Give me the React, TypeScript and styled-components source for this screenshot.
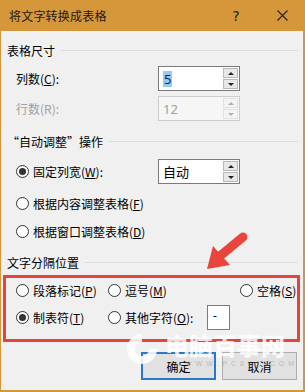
import React from "react";
import styled, { createGlobalStyle } from "styled-components";

const Global = createGlobalStyle`
  html, body { margin: 0; padding: 0; background: #f0f0f0; }
  body {
    font-family: "Noto Sans CJK SC", "Noto Sans", sans-serif;
    font-size: 12px;
    color: #000;
  }
  u { text-decoration: underline; text-underline-offset: 1px; }
`;

const Window = styled.div`
  position: relative;
  width: 305px;
  height: 392px;
  display: flex;
  flex-direction: column;
  overflow: hidden;
`;

const TitleBar = styled.div`
  height: 31px;
  flex: none;
  background: #d6963a;
  display: flex;
  align-items: center;
  padding-left: 9px;
  color: #1c1c1c;
  font-size: 12px;
`;

const TitleText = styled.div`
  flex: 1;
  letter-spacing: 0.2px;
`;

const TitleButton = styled.div`
  width: 46px;
  height: 31px;
  display: flex;
  align-items: center;
  justify-content: center;
  font-family: "DejaVu Sans", sans-serif;
  font-size: 14px;
  color: #222;
`;

const Body = styled.div`
  flex: 1;
  background: #f0f0f0;
  border: solid #d6963a;
  border-width: 0 2px 2px 1px;
  display: flex;
  flex-direction: column;
  padding-top: 11px;
`;

const GroupHeader = styled.div<{ $mt?: number }>`
  display: flex;
  align-items: center;
  height: 16px;
  margin: ${(p) => p.$mt ?? 0}px 5px 0 6px;
  white-space: nowrap;
  &::after {
    content: "";
    flex: 1;
    height: 1px;
    background: #dcdcdc;
    margin-left: 6px;
  }
`;

const Row = styled.div<{ $mt: number; $h: number }>`
  display: flex;
  align-items: center;
  height: ${(p) => p.$h}px;
  margin-top: ${(p) => p.$mt}px;
  padding-left: 15px;
`;

const Label = styled.div<{ $disabled?: boolean }>`
  width: 142px;
  color: ${(p) => (p.$disabled ? "#a0a0a0" : "#000")};
  white-space: nowrap;
`;

const Spin = styled.div<{ $disabled?: boolean }>`
  width: 82px;
  height: 25px;
  box-sizing: border-box;
  border: 1px solid ${(p) => (p.$disabled ? "#cccccc" : "#7a7a7a")};
  background: ${(p) => (p.$disabled ? "#f6f6f6" : "#fff")};
  display: flex;
  align-items: stretch;
`;

const SpinValue = styled.div<{ $disabled?: boolean }>`
  flex: 1;
  display: flex;
  align-items: center;
  padding-left: 4px;
  font-family: "Noto Sans", "Noto Sans CJK SC", sans-serif;
  font-size: 13px;
  color: ${(p) => (p.$disabled ? "#a0a0a0" : "#000")};
`;

const Selected = styled.span`
  background: #99c9ef;
  color: #0a1a60;
  padding: 0 1px;
  line-height: 16px;
`;

const SpinButtons = styled.div`
  width: 15px;
  display: flex;
  flex-direction: column;
  gap: 1px;
  padding: 1px;
`;

const SpinBtn = styled.div<{ $disabled?: boolean }>`
  flex: 1;
  background: ${(p) => (p.$disabled ? "#f4f4f4" : "#e8e8e8")};
  border: 1px solid ${(p) => (p.$disabled ? "#e0e0e0" : "#b8b8b8")};
  display: flex;
  align-items: center;
  justify-content: center;
`;

const Tri = styled.div<{ $down?: boolean; $disabled?: boolean }>`
  width: 0;
  height: 0;
  border-left: 3px solid transparent;
  border-right: 3px solid transparent;
  ${(p) =>
    p.$down
      ? `border-top: 3px solid ${p.$disabled ? "#b0b0b0" : "#222"};`
      : `border-bottom: 3px solid ${p.$disabled ? "#b0b0b0" : "#222"};`}
`;

const RadioItem = styled.div<{ $w?: number }>`
  display: flex;
  align-items: center;
  width: ${(p) => (p.$w ? `${p.$w}px` : "auto")};
  white-space: nowrap;
`;

const RadioCircle = styled.div<{ $checked?: boolean }>`
  width: 13px;
  height: 13px;
  box-sizing: border-box;
  border-radius: 50%;
  border: 1px solid #333;
  background: #fff;
  margin-right: 4px;
  flex: none;
  display: flex;
  align-items: center;
  justify-content: center;
  &::after {
    content: "";
    width: 7px;
    height: 7px;
    border-radius: 50%;
    background: ${(p) => (p.$checked ? "#333" : "transparent")};
  }
`;

const RedBox = styled.div`
  margin: 5px 3px 0 2px;
  border: 3px solid #e0463c;
  padding: 2px 0 9px 10px;
  display: grid;
  grid-template-columns: 92px 132px auto;
  grid-template-rows: 20px 25px;
  row-gap: 5px;
  align-items: center;
`;

const SmallInput = styled.div`
  width: 23px;
  height: 25px;
  box-sizing: border-box;
  border: 1px solid #7a7a7a;
  background: #fff;
  padding: 4px 0 0 5px;
  font-family: "Noto Sans", sans-serif;
  font-size: 12px;
  line-height: 12px;
`;

const ButtonRow = styled.div`
  display: flex;
  justify-content: flex-end;
  gap: 6px;
  margin-top: 10px;
  padding-right: 6px;
`;

const Button = styled.div<{ $default?: boolean }>`
  width: 75px;
  height: 28px;
  box-sizing: border-box;
  background: #e1e1e1;
  border: ${(p) => (p.$default ? "2px solid #2a78c8" : "1px solid #adadad")};
  display: flex;
  align-items: center;
  justify-content: center;
`;

const Overlay = styled.svg`
  position: absolute;
  left: 0;
  top: 0;
  pointer-events: none;
`;

const Watermark = styled.div`
  position: absolute;
  left: 123px;
  top: 330px;
  display: flex;
  align-items: flex-start;
  gap: 4px;
  pointer-events: none;
`;

const WatermarkText = styled.div`
  display: flex;
  flex-direction: column;
  align-items: flex-start;
`;

const WatermarkBig = styled.div`
  font-family: "Noto Sans CJK SC", sans-serif;
  font-weight: 900;
  font-size: 24px;
  line-height: 30px;
  color: rgba(255, 255, 255, 0.82);
`;

const WatermarkSmall = styled.div`
  font-family: "Liberation Sans", sans-serif;
  font-size: 7px;
  line-height: 8px;
  letter-spacing: 4px;
  padding-left: 20px;
  color: rgba(120, 120, 120, 0.4);
`;

function SpinBox({ children, disabled }: { children: React.ReactNode; disabled?: boolean }) {
  return (
    <Spin $disabled={disabled}>
      <SpinValue $disabled={disabled}>{children}</SpinValue>
      <SpinButtons>
        <SpinBtn $disabled={disabled}>
          <Tri $disabled={disabled} />
        </SpinBtn>
        <SpinBtn $disabled={disabled}>
          <Tri $down $disabled={disabled} />
        </SpinBtn>
      </SpinButtons>
    </Spin>
  );
}

function Radio({ checked, children, w }: { checked?: boolean; children: React.ReactNode; w?: number }) {
  return (
    <RadioItem $w={w}>
      <RadioCircle $checked={checked} />
      <span>{children}</span>
    </RadioItem>
  );
}

export default function App() {
  return (
    <>
      <Global />
      <Window>
        <TitleBar>
          <TitleText>将文字转换成表格</TitleText>
          <TitleButton>?</TitleButton>
          <TitleButton>
            <svg width="11" height="11" viewBox="0 0 11 11">
              <path d="M0.5 0.5 L10.5 10.5 M10.5 0.5 L0.5 10.5" stroke="#222" strokeWidth="1.1" />
            </svg>
          </TitleButton>
        </TitleBar>
        <Body>
          <GroupHeader>表格尺寸</GroupHeader>
          <Row $mt={8} $h={25}>
            <Label>
              列数(<u>C</u>):
            </Label>
            <SpinBox>
              <Selected>5</Selected>
            </SpinBox>
          </Row>
          <Row $mt={5} $h={25}>
            <Label $disabled>行数(R):</Label>
            <SpinBox disabled>12</SpinBox>
          </Row>
          <GroupHeader $mt={12}>“自动调整”操作</GroupHeader>
          <Row $mt={10} $h={25}>
            <Radio checked w={142}>
              固定列宽(<u>W</u>):
            </Radio>
            <SpinBox>自动</SpinBox>
          </Row>
          <Row $mt={9} $h={20}>
            <Radio>
              根据内容调整表格(<u>F</u>)
            </Radio>
          </Row>
          <Row $mt={8} $h={20}>
            <Radio>
              根据窗口调整表格(<u>D</u>)
            </Radio>
          </Row>
          <GroupHeader $mt={13}>文字分隔位置</GroupHeader>
          <RedBox>
            <Radio>
              段落标记(<u>P</u>)
            </Radio>
            <Radio>
              逗号(<u>M</u>)
            </Radio>
            <Radio>
              空格(<u>S</u>)
            </Radio>
            <Radio checked>
              制表符(<u>T</u>)
            </Radio>
            <RadioItem>
              <RadioCircle />
              <RadioItem $w={82}>
                其他字符(<u>O</u>):
              </RadioItem>
              <SmallInput>-</SmallInput>
            </RadioItem>
            <div />
          </RedBox>
          <ButtonRow>
            <Button $default>确定</Button>
            <Button>取消</Button>
          </ButtonRow>
        </Body>
        <Watermark>
          <svg width="38" height="38" viewBox="0 0 38 38">
            <path
              d="M19 4 A15 15 0 1 0 34 19 L26 19 A7 7 0 1 1 19 12 Z"
              fill="rgba(255,255,255,0.85)"
            />
          </svg>
          <WatermarkText>
            <WatermarkBig>电脑百事网</WatermarkBig>
            <WatermarkSmall>WWW.PC841.COM</WatermarkSmall>
          </WatermarkText>
        </Watermark>
        <Overlay width="305" height="392" viewBox="0 0 305 392">
          <line x1="243" y1="237" x2="220" y2="256" stroke="#e8453c" strokeWidth="9" strokeLinecap="round" />
          <polygon points="207,269 213,246 230,265" fill="#e8453c" />
        </Overlay>
      </Window>
    </>
  );
}
